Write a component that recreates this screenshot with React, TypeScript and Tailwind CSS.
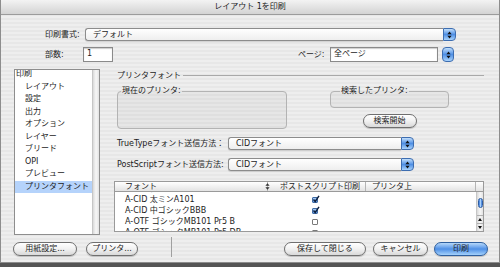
import React from 'react';

// Mac OS X Aqua-style print dialog (Japanese)

function UpDown() {
  return (
    <svg width="5" height="8" viewBox="0 0 5 8">
      <path d="M2.5 0.6L4.6 3.2H0.4Z M2.5 7.4L4.6 4.8H0.4Z" fill="#111" />
    </svg>
  );
}

function Popup({ label, className }: { label: string; className: string }) {
  return (
    <div className={`flex ${className}`}>
      <div className="flex-1 flex items-center pl-[7px] border border-r-0 border-[#8c8c8c] rounded-l-[3px] bg-gradient-to-b from-white to-[#eeeeee] shadow-[0_1px_1px_rgba(0,0,0,0.12)]">
        {label}
      </div>
      <div className="w-[13px] flex items-center justify-center rounded-r-[4px] border border-[#3d6db0] bg-gradient-to-b from-[#c2dffb] via-[#4f8fe4] to-[#a8d2fb]">
        <UpDown />
      </div>
    </div>
  );
}

function Pill({ label, className, primary }: { label: string; className: string; primary?: boolean }) {
  return (
    <div
      className={`h-[14px] rounded-full border flex items-center justify-center shadow-[0_1px_1px_rgba(0,0,0,0.2)] ${
        primary
          ? 'border-[#2e5f9f] bg-gradient-to-b from-[#b6d8fa] via-[#4f90e6] to-[#a4d1fb]'
          : 'border-[#6f6f6f] bg-gradient-to-b from-white via-[#f1f1f1] to-[#d9d9d9]'
      } ${className}`}
    >
      {label}
    </div>
  );
}

function Check({ on }: { on: boolean }) {
  return (
    <div
      className={`relative w-[6px] h-[6px] border rounded-[1px] ${
        on ? 'border-[#3f6aa3] bg-gradient-to-b from-[#a9cdf5] to-[#5d96e0]' : 'border-[#7a7a7a] bg-white'
      }`}
    >
      {on && (
        <svg className="absolute left-[-1px] top-[-3px]" width="8" height="8" viewBox="0 0 8 8">
          <path d="M1.5 4.5L3.2 6.5L7 0.8" stroke="#0d1f3d" strokeWidth="1.4" fill="none" />
        </svg>
      )}
    </div>
  );
}

const menuItems = ['レイアウト', '設定', '出力', 'オプション', 'レイヤー', 'ブリード', 'OPI', 'プレビュー', 'プリンタフォント'];

const fontRows = [
  { name: 'A-CID 細ミンA101', on: true },
  { name: 'A-CID 太ミンA101', on: true },
  { name: 'A-CID 中ゴシックBBB', on: true },
  { name: 'A-OTF ゴシックMB101 Pr5 B', on: false },
  { name: 'A-OTF ゴシックMB101 Pr5 DB', on: false },
];

export default function App() {
  return (
    <div className="w-[500px] h-[267px] overflow-hidden bg-[#555555] text-[8px] text-[#1c1c1c] font-['DejaVu_Sans','Noto_Sans_CJK_JP',sans-serif]">
      <div className="h-[263px] flex flex-col border border-t-0 border-[#8d8d8d] bg-[repeating-linear-gradient(to_bottom,#eeeeee_0px,#eeeeee_2px,#e7e7e7_2px,#e7e7e7_4px)]">
        {/* Title bar */}
        <div className="h-[15px] flex items-center justify-center border-b border-[#9b9b9b] bg-gradient-to-b from-[#f3f3f3] to-[#d3d3d3] text-[#222]">
          レイアウト 1を印刷
        </div>

        {/* Print style */}
        <div className="mt-[13px] h-[13px] flex items-center pl-[44px]">
          <div className="w-[40px]">印刷書式:</div>
          <Popup label="デフォルト" className="w-[371px] h-full" />
        </div>

        {/* Copies / pages */}
        <div className="mt-[6px] h-[15px] flex items-center pl-[44px]">
          <div className="w-[38px]">部数:</div>
          <div className="w-[30px] h-full border border-[#8a8a8a] bg-white pl-[3px] leading-[12px] shadow-[inset_0_1px_1px_rgba(0,0,0,0.2)]">1</div>
          <div className="ml-[185px] w-[32px]">ページ:</div>
          <div className="w-[108px] h-full border border-[#8a8a8a] bg-white pl-[3px] leading-[12px] shadow-[inset_0_1px_1px_rgba(0,0,0,0.2)]">全ページ</div>
          <div className="ml-[4px] w-[12px] h-full flex items-center justify-center rounded-[4px] border border-[#3d6db0] bg-gradient-to-b from-[#c2dffb] via-[#4f8fe4] to-[#a8d2fb]">
            <UpDown />
          </div>
        </div>

        {/* Main area */}
        <div className="mt-[7px] h-[166px] flex">
          {/* Left list */}
          <div className="ml-[13px] w-[86px] h-full flex border border-[#8e8e8e] bg-white overflow-hidden">
            <div className="flex-1 overflow-hidden">
              <div className="mt-[-1.75px]">
                <div className="h-[12.5px] leading-[12.5px] pl-[1px]">印刷</div>
                {menuItems.map((item, i) => (
                  <div
                    key={item}
                    className={`h-[12.5px] leading-[12.5px] pl-[10px] ${i === menuItems.length - 1 ? 'bg-[#b5d3fb]' : ''}`}
                  >
                    {item}
                  </div>
                ))}
              </div>
            </div>
            <div className="w-[7px] border-l border-[#c6c6c6] bg-gradient-to-r from-[#d9d9d9] via-[#f7f7f7] to-[#e3e3e3]" />
          </div>

          {/* Right panel */}
          <div className="ml-[14px] w-[370px] flex flex-col">
            <div className="mt-[1px] h-[11px] flex items-center pl-[3px]">
              <span>プリンタフォント</span>
              <div className="flex-1 ml-[2px] border-t border-[#a9a9a9]" />
            </div>

            <div className="mt-[5px] flex">
              <fieldset className="ml-[3px] w-[170px] h-[43px] border border-[#b3b3b3] rounded-[4px] bg-black/[0.03]">
                <legend className="ml-[3px] px-[1px] leading-[10px]">現在のプリンタ:</legend>
              </fieldset>
              <div className="ml-[43px] w-[119px] flex flex-col items-center">
                <fieldset className="w-full h-[22px] border border-[#b3b3b3] rounded-[4px] bg-black/[0.03]">
                  <legend className="ml-[9px] px-[1px] leading-[10px]">検索したプリンタ:</legend>
                </fieldset>
                <Pill label="検索開始" className="mt-[6px] w-[54px] h-[13px]" />
              </div>
            </div>

            <div className="mt-[8px] h-[13px] flex items-center pl-[3px]">
              <div className="w-[111px]">TrueTypeフォント送信方法：</div>
              <Popup label="CIDフォント" className="w-[186px] h-full" />
            </div>
            <div className="mt-[8px] h-[13px] flex items-center pl-[3px]">
              <div className="w-[111px]">PostScriptフォント送信方法:</div>
              <Popup label="CIDフォント" className="w-[186px] h-full" />
            </div>

            {/* Font table */}
            <div className="mt-[10px] h-[51px] flex flex-col border border-[#9a9a9a] bg-white overflow-hidden">
              <div className="h-[10px] flex border-b border-[#9a9a9a] bg-gradient-to-b from-white to-[#e3e3e3] relative z-10">
                <div className="w-[153px] pl-[10px] leading-[9px] border-r border-[#b5b5b5] flex items-center justify-between">
                  <span>フォント</span>
                  <svg className="mr-[-3px]" width="5" height="7" viewBox="0 0 5 7">
                    <path d="M2.5 0.3L4.6 2.8H0.4Z M2.5 6.7L4.6 4.2H0.4Z" fill="#333" />
                  </svg>
                </div>
                <div className="w-[98px] pl-[12px] leading-[9px] border-r border-[#b5b5b5]">ポストスクリプト印刷</div>
                <div className="w-[110px] pl-[6px] leading-[9px] border-r border-[#b5b5b5]">プリンタ上</div>
                <div className="flex-1" />
              </div>
              <div className="flex-1 flex overflow-hidden">
                <div className="flex-1 overflow-hidden">
                  <div className="mt-[-8.5px]">
                    {fontRows.map((r) => (
                      <div key={r.name} className="h-[11px] flex items-center">
                        <div className="w-[153px] pl-[10px] whitespace-nowrap">{r.name}</div>
                        <div className="w-[98px] pl-[44px]">
                          <Check on={r.on} />
                        </div>
                      </div>
                    ))}
                  </div>
                </div>
                <div className="w-[7px] flex flex-col border-l border-[#c6c6c6] bg-gradient-to-r from-[#d9d9d9] via-[#f7f7f7] to-[#e3e3e3]">
                  <div className="mt-[6px] mx-auto w-[5px] h-[10px] rounded-full border border-[#2f5ea3] bg-gradient-to-r from-[#2f72d8] via-[#a9d0f8] to-[#2f72d8]" />
                  <div className="flex-1" />
                  <div className="h-[8px] flex items-center justify-center border-t border-[#b0b0b0]">
                    <svg width="4" height="3" viewBox="0 0 4 3"><path d="M2 0L4 3H0Z" fill="#111" /></svg>
                  </div>
                  <div className="h-[8px] flex items-center justify-center border-t border-[#b0b0b0]">
                    <svg width="4" height="3" viewBox="0 0 4 3"><path d="M2 3L4 0H0Z" fill="#111" /></svg>
                  </div>
                </div>
              </div>
            </div>
          </div>
        </div>

        {/* Bottom buttons */}
        <div className="mt-[2px] h-[20px] flex items-start pl-[12px] pr-[11px]">
          <Pill label="用紙設定..." className="mt-[5px] w-[64px]" />
          <Pill label="プリンタ..." className="mt-[5px] ml-[9px] w-[52px]" />
          <div className="ml-[33px] w-px h-full bg-[#a0a0a0]" />
          <div className="flex-1" />
          <Pill label="保存して閉じる" className="mt-[5px] w-[82px]" />
          <Pill label="キャンセル" className="mt-[5px] ml-[7px] w-[55px]" />
          <Pill label="印刷" primary className="mt-[5px] ml-[6px] w-[54px]" />
        </div>
      </div>
    </div>
  );
}
